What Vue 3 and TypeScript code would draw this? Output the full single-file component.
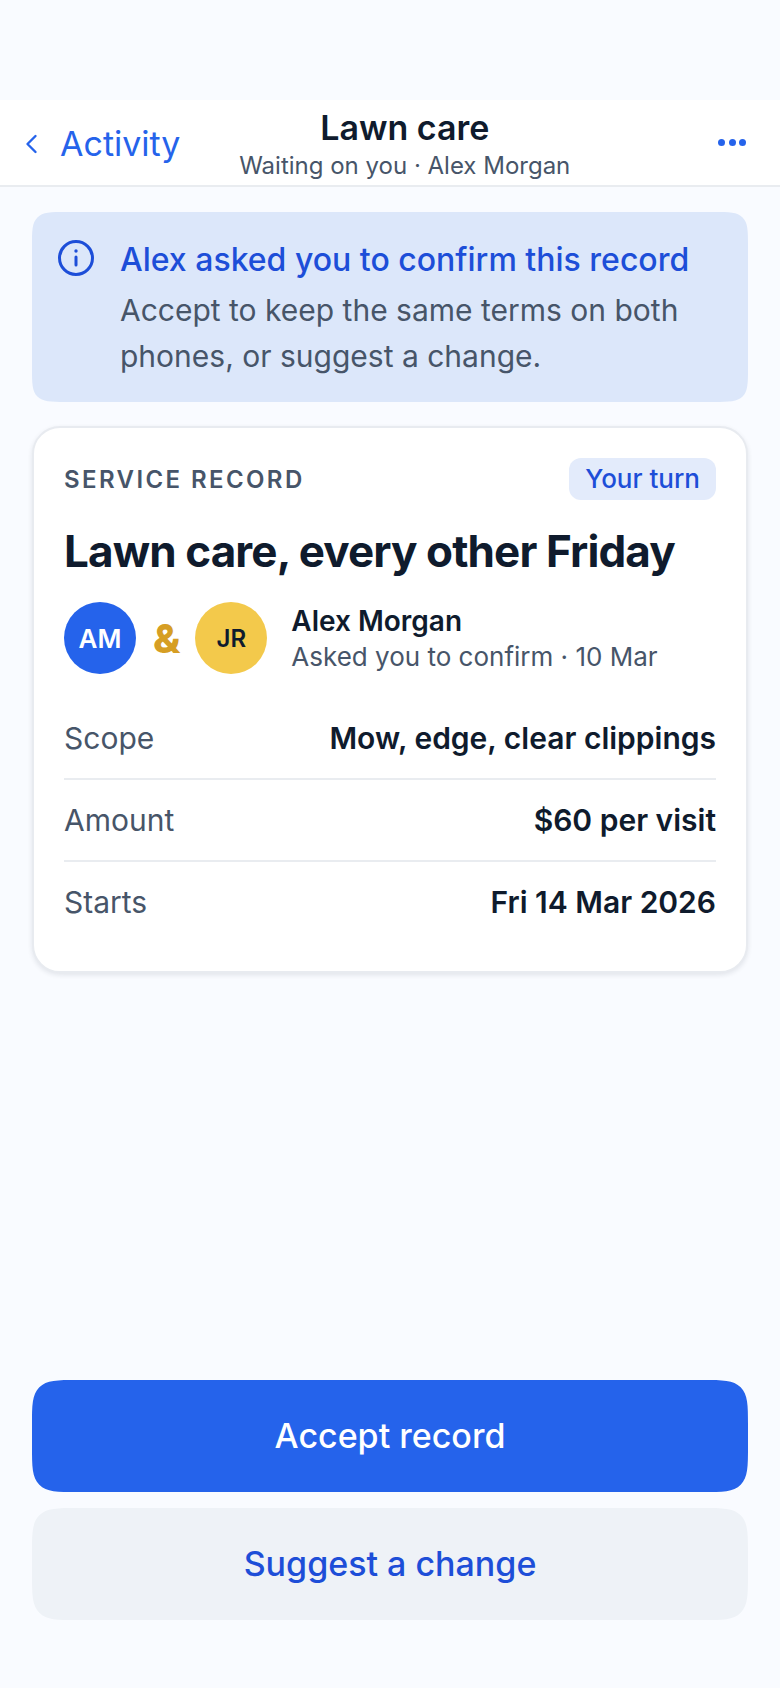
<template>
  <div class="screen">
    <header class="nav">
      <div class="nav-back">
        <svg class="chevron" viewBox="0 0 14 24" width="14" height="24" fill="none" stroke="#2563eb" stroke-width="2.4" stroke-linecap="round" stroke-linejoin="round">
          <path d="M11.5 4 3.5 12 11.5 20" />
        </svg>
        <span>Activity</span>
      </div>
      <div class="nav-title">
        <div class="nav-name">Lawn care</div>
        <div class="nav-sub">Waiting on you · Alex Morgan</div>
      </div>
      <div class="nav-more">
        <span class="dot"></span><span class="dot"></span><span class="dot"></span>
      </div>
    </header>

    <main class="content">
      <section class="banner">
        <svg class="info" viewBox="0 0 36 36" width="36" height="36" fill="none" stroke="#1d4ed8" stroke-width="3" stroke-linecap="round">
          <circle cx="18" cy="18" r="16.5" />
          <path d="M18 17v8" />
          <circle cx="18" cy="11" r="1.7" fill="#1d4ed8" stroke="none" />
        </svg>
        <div>
          <div class="banner-title">Alex asked you to confirm this record</div>
          <div class="banner-text">Accept to keep the same terms on both phones, or suggest a change.</div>
        </div>
      </section>

      <section class="card">
        <div class="card-top">
          <span class="eyebrow">SERVICE RECORD</span>
          <span class="badge">Your turn</span>
        </div>
        <h1 class="card-title">Lawn care, every other Friday</h1>
        <div class="people">
          <span class="avatar am">AM</span>
          <span class="amp">&amp;</span>
          <span class="avatar jr">JR</span>
          <div class="who">
            <div class="who-name">Alex Morgan</div>
            <div class="who-sub">Asked you to confirm · 10 Mar</div>
          </div>
        </div>
        <div class="rows">
          <div v-for="row in rows" :key="row.label" class="row">
            <span class="row-label">{{ row.label }}</span>
            <span class="row-value">{{ row.value }}</span>
          </div>
        </div>
      </section>
    </main>

    <footer class="actions">
      <button class="btn primary">Accept record</button>
      <button class="btn secondary">Suggest a change</button>
    </footer>
  </div>
</template>

<script setup lang="ts">
const rows = [
  { label: 'Scope', value: 'Mow, edge, clear clippings' },
  { label: 'Amount', value: '$60 per visit' },
  { label: 'Starts', value: 'Fri 14 Mar 2026' },
]
</script>

<style>
html, body { margin: 0; background: #f9fbff; }
</style>

<style scoped>
.screen {
  height: 1688px;
  padding-top: 100px;
  box-sizing: border-box;
  display: flex;
  flex-direction: column;
  background: #f9fbff;
  font-family: Inter, "Liberation Sans", sans-serif;
  color: #0f1b2d;
}
.nav {
  height: 87px;
  box-sizing: border-box;
  display: flex;
  align-items: center;
  padding: 0 34px 0 24px;
  background: #fff;
  border-bottom: 2px solid #e9ecf0;
}
.nav-back {
  display: flex;
  align-items: center;
  gap: 22px;
  color: #2563eb;
  font-size: 34px;
  line-height: 40px;
  margin-top: 2px;
}
.nav-title {
  flex: 1;
  margin-right: 89px;
  padding-top: 3px;
  text-align: center;
}
.nav-name { font-size: 34px; line-height: 42px; font-weight: 600; }
.nav-sub { font-size: 24px; line-height: 33px; color: #475569; }
.nav-more { display: flex; gap: 3.5px; }
.dot { width: 7px; height: 7px; border-radius: 50%; background: #2563eb; }
.content {
  flex: 1;
  padding: 25px 32px 0;
  display: flex;
  flex-direction: column;
  gap: 24px;
}
.banner {
  height: 190px;
  box-sizing: border-box;
  padding: 28px 24px 28px 26px;
  display: flex;
  gap: 26px;
  background: #dce7fa;
  border-radius: 34px;
  corner-shape: squircle;
}
.info { flex: none; }
.banner-title { font-size: 32px; line-height: 40px; font-weight: 500; color: #1d4ed8; }
.banner-text { margin-top: 7px; font-size: 30px; line-height: 46px; color: #475569; }
.card {
  height: 547px;
  box-sizing: border-box;
  padding: 30px 30px 0;
  background: #fff;
  border: 2px solid #e8ebf0;
  border-radius: 28px;
  box-shadow: 0 2px 5px rgba(15, 27, 45, 0.1);
}
.card-top { display: flex; justify-content: space-between; align-items: center; }
.eyebrow { font-size: 24px; font-weight: 600; letter-spacing: 0.1em; color: #475569; }
.badge {
  padding: 4px 16px;
  font-size: 26px;
  line-height: 34px;
  font-weight: 500;
  color: #1d4ed8;
  background: #e3ebfb;
  border-radius: 12px;
}
.card-title { margin: 23px 0 0; font-size: 44px; line-height: 56px; font-weight: 700; letter-spacing: -0.02em; }
.people { margin-top: 22px; display: flex; align-items: center; }
.avatar {
  width: 72px;
  height: 72px;
  border-radius: 50%;
  display: flex;
  align-items: center;
  justify-content: center;
  font-size: 26px;
  font-weight: 600;
}
.am { background: #2563eb; color: #fff; }
.jr { background: #f3c94b; color: #0f1b2d; font-size: 24px; }
.amp { margin: 0 15px 0 17px; font-size: 40px; font-weight: 800; color: #d69e24; }
.who { margin-left: 24px; padding-top: 2px; }
.who-name { font-size: 28px; line-height: 36px; font-weight: 600; }
.who-sub { font-size: 26px; line-height: 36px; color: #475569; }
.rows { margin-top: 23px; }
.row {
  height: 82px;
  box-sizing: border-box;
  display: flex;
  align-items: center;
  justify-content: space-between;
  border-bottom: 2px solid #e9ecf0;
}
.row:last-child { border-bottom: 0; padding-bottom: 2px; }
.row-label { font-size: 30px; color: #475569; }
.row-value { font-size: 30px; font-weight: 600; }
.actions {
  padding: 0 32px 68px;
  display: flex;
  flex-direction: column;
  gap: 16px;
}
.btn {
  height: 112px;
  padding-bottom: 2px;
  border: 0;
  border-radius: 46px;
  corner-shape: squircle;
  font-family: inherit;
  font-size: 34px;
  font-weight: 500;
}
.primary { background: #2563eb; color: #fff; }
.secondary { background: #eef2f7; color: #1d4ed8; }
</style>
